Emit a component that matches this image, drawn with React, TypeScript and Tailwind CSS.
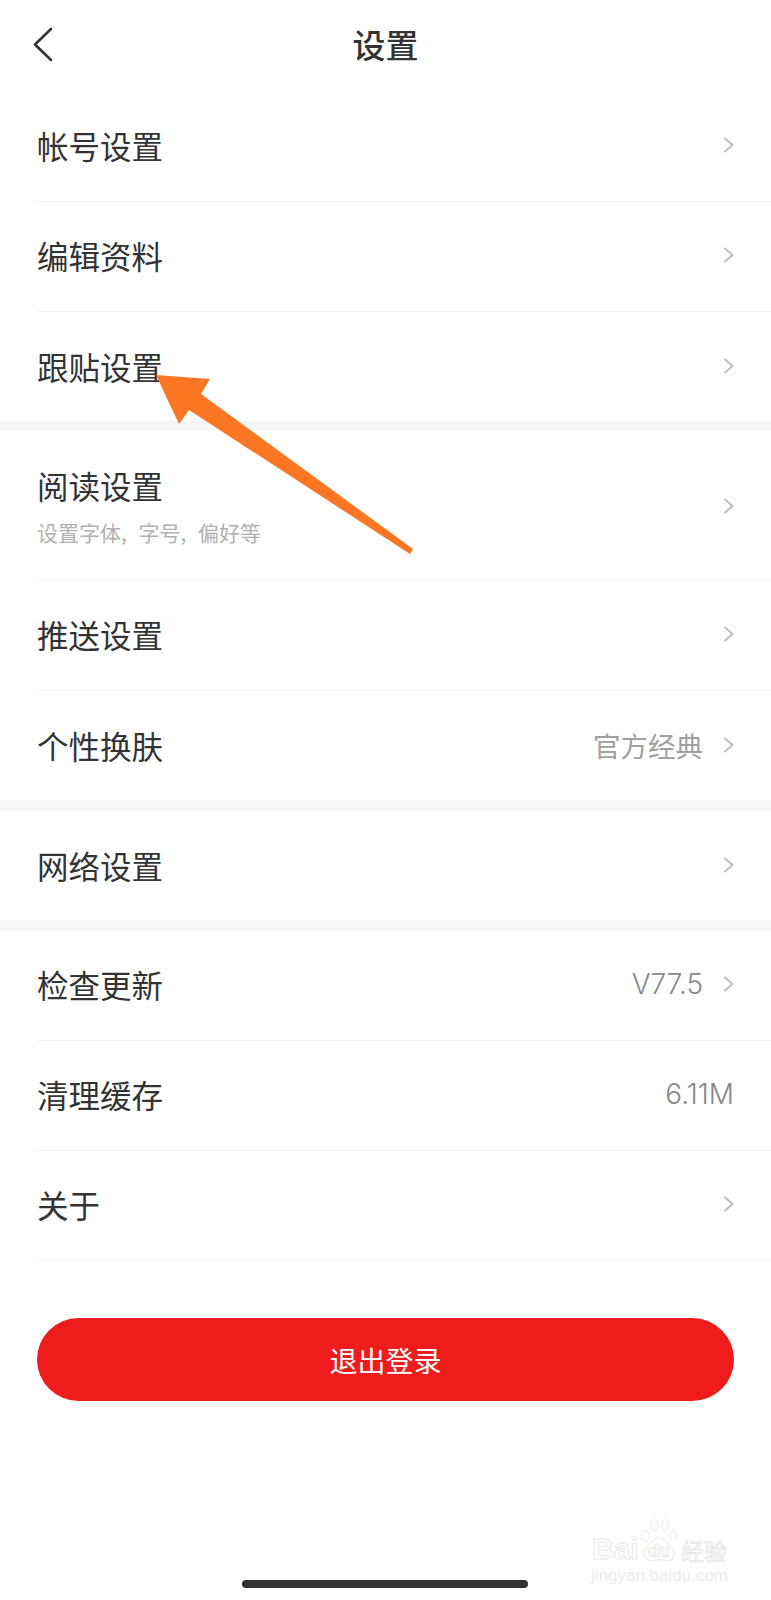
const font = { fontFamily: '"Noto Sans CJK SC", sans-serif' };

function Chevron() {
  return (
    <svg width="11" height="16" viewBox="0 0 11 16" fill="none" className="shrink-0">
      <path d="M1.5 1 L9.5 8 L1.5 15" stroke="#bdbdbd" strokeWidth="2" />
    </svg>
  );
}

type RowProps = {
  title: string;
  sub?: string;
  value?: string;
  latin?: boolean;
  arrow?: boolean;
  tall?: boolean;
  last?: boolean;
};

function Row({ title, sub, value, latin, arrow = true, tall, last }: RowProps) {
  return (
    <div className={tall ? "ml-[37px] h-[150px] flex items-center pr-[37px] border-b border-[#f3f3f3]" : last ? "ml-[37px] h-[109px] pb-[2px] flex items-center pr-[37px]" : "ml-[37px] h-[110px] pb-[3px] flex items-center pr-[37px] border-b border-[#f3f3f3]"}>
      <div className="flex-1">
        <div className="text-[31.5px] leading-[40px] text-[#333333]">{title}</div>
        {sub && <div className="text-[21px] leading-[28px] mt-[13px] text-[#b0b0b0] [word-spacing:7px]">{sub}</div>}
      </div>
      {value && (
        <span className={latin ? "text-[28px] leading-[36px] font-light text-[#888888] [font-family:Inter,sans-serif]" : "text-[27.5px] leading-[36px] text-[#a0a0a0]"}>
          {value}
        </span>
      )}
      {arrow && (
        <div className="ml-[20px]">
          <Chevron />
        </div>
      )}
    </div>
  );
}

export default function App() {
  return (
    <div className="relative w-[771px] h-[1600px] bg-white overflow-hidden" style={font}>
      <header className="relative h-[92px] flex items-start justify-center pt-[23px]">
        <svg width="22" height="35" viewBox="0 0 22 35" fill="none" className="absolute left-[32px] top-[27px]">
          <path d="M19 2 L3 17.5 L19 33" stroke="#333333" strokeWidth="2.6" strokeLinecap="round" strokeLinejoin="round" />
        </svg>
        <h1 className="text-[33px] leading-[42px] font-medium text-[#333333]">设置</h1>
      </header>

      <Row title="帐号设置" />
      <Row title="编辑资料" />
      <Row title="跟贴设置" last />
      <div className="h-[10px] bg-[#f5f6f8]" />
      <Row title="阅读设置" sub="设置字体, 字号, 偏好等" tall />
      <Row title="推送设置" />
      <Row title="个性换肤" value="官方经典" last />
      <div className="h-[11px] bg-[#f5f6f8]" />
      <Row title="网络设置" last />
      <div className="h-[11px] bg-[#f5f6f8]" />
      <Row title="检查更新" value="V77.5" latin />
      <Row title="清理缓存" value="6.11M" latin arrow={false} />
      <Row title="关于" />

      <div className="px-[37px] mt-[57px]">
        <button className="w-full h-[83px] rounded-full bg-[#ee1c1c] text-white text-[28px] flex items-center justify-center">
          退出登录
        </button>
      </div>

      {/* annotation arrow on top of the screenshot */}
      <svg width="771" height="600" viewBox="0 0 771 600" className="absolute left-0 top-0 pointer-events-none">
        <polygon points="156,375 210,379 201,394 413,549 410,554 189,410 179,424" fill="#fd7624" />
      </svg>

      {/* watermark */}
      <div className="absolute left-[590px] top-[1517px] w-[140px] h-[66px] pointer-events-none">
        <svg width="40" height="45" viewBox="0 0 44 50" fill="none" stroke="#ececec" strokeWidth="1.2" className="absolute left-[49px] top-[1px]">
          <ellipse cx="7" cy="20" rx="4" ry="6" />
          <ellipse cx="17" cy="8" rx="4" ry="6" />
          <ellipse cx="29" cy="8" rx="4" ry="6" />
          <ellipse cx="38" cy="20" rx="4" ry="6" />
          <path d="M22 22 C15 22 12 30 7 35 C2 41 8 49 15 47 C20 46 25 46 30 47 C37 49 42 41 37 34 C32 29 29 22 22 22 Z" />
        </svg>
        <div className="absolute left-[2px] top-[18px] text-[30px] leading-[28px] font-bold text-transparent [-webkit-text-stroke:1px_#e8e8e8] [font-family:'Liberation_Sans',sans-serif]">Bai</div>
        <div className="absolute left-[58px] top-[24px] text-[18px] leading-[20px] font-bold text-transparent [-webkit-text-stroke:1px_#e8e8e8] [font-family:'Liberation_Sans',sans-serif]">du</div>
        <div className="absolute left-[91px] top-[20px] text-[23px] leading-[26px] text-transparent [-webkit-text-stroke:1px_#e8e8e8] whitespace-nowrap">经验</div>
        <div className="absolute left-[1px] top-[50px] text-[17px] leading-[18px] text-[#ececec] whitespace-nowrap [font-family:'Liberation_Sans',sans-serif]">jingyan.baidu.com</div>
      </div>

      {/* home indicator */}
      <div className="absolute left-[242px] top-[1580px] w-[286px] h-[8px] rounded-full bg-[#333333]" />
    </div>
  );
}
